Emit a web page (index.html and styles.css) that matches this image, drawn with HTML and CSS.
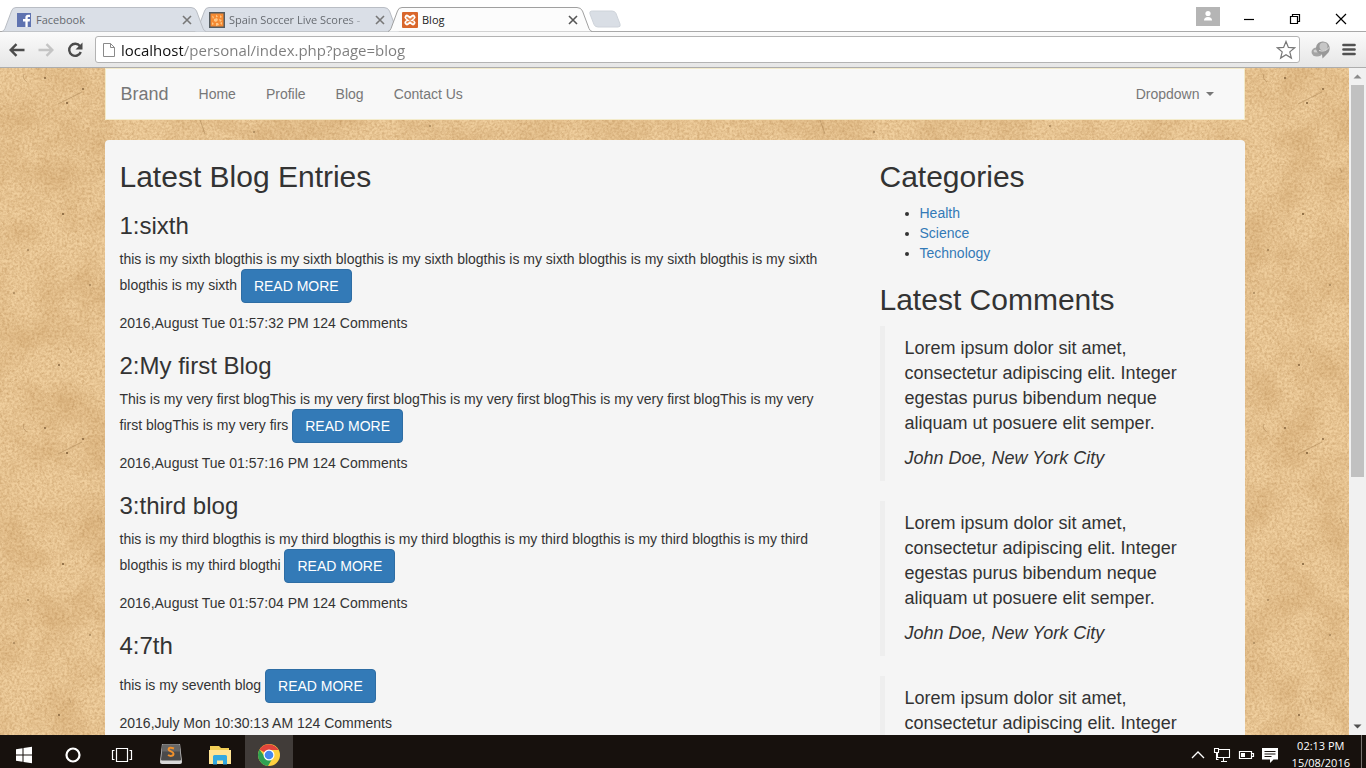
FILE: index.html
```html
<!DOCTYPE html>
<html lang="en">
<head>
<meta charset="utf-8">
<title>Blog</title>
<link rel="stylesheet" href="styles.css">
</head>
<body>
<svg class="defs" width="0" height="0" aria-hidden="true">
  <symbol id="tab-shape" viewBox="0 0 204 25" preserveAspectRatio="none">
    <path d="M0 24.500Q2 24 3 21.500L9.500 4Q10.500.500 14 .500H189Q193 .500 194.500 4L201 21.500Q202 24 204 24.500"/>
  </symbol>
  <symbol id="close" viewBox="0 0 10 10"><path d="M1 1l8 8M9 1L1 9" fill="none" stroke="currentColor" stroke-width="1.600"/></symbol>
</svg>
<div class="browser">
  <header class="tabstrip">
    <div class="tabs">
      <div class="tab tab-front">
        <svg class="tab-bg"><use href="#tab-shape"/></svg>
        <svg class="favicon" viewBox="0 0 16 16"><rect x="1" y="1" width="14" height="14" fill="#5f73b0"/><path d="M9.400 15V9.400H7V7h2.400V5.500C9.400 3.600 10.400 2.700 12 2.700h2v2.200h-1.300c-.8 0-1 .3-1 1V7H14l-.3 2.400h-2V15z" fill="#fff"/></svg>
        <span class="tab-title">Facebook</span>
        <button class="tab-close" aria-label="Close Facebook"><svg><use href="#close"/></svg></button>
      </div>
      <div class="tab">
        <svg class="tab-bg"><use href="#tab-shape"/></svg>
        <svg class="favicon" viewBox="0 0 16 16"><rect x=".75" y=".75" width="14.500" height="14.500" fill="#f58a32" stroke="#555b5e" stroke-width="1.500"/><path d="M3 3.500l2 1.500-1 2zM7 2.500l2 2-2 1zM11 3l2 2-2 1zM5 7l3-1 1 2-2 2-2-1zM10 7l3 1-2 2zM3 10l2 2-2 1zM7 11l2 0 1 2-3 1zM11 11l2-1v3z" fill="#ffc684"/></svg>
        <span class="tab-title tab-title-fade">Spain Soccer Live Scores -</span>
        <button class="tab-close" aria-label="Close Spain Soccer"><svg><use href="#close"/></svg></button>
      </div>
      <div class="tab tab-active">
        <svg class="tab-bg"><use href="#tab-shape"/></svg>
        <svg class="favicon" viewBox="0 0 16 16"><rect width="16" height="16" rx="1" fill="#d9662b"/><path d="M5 5.200L8 7.500l3-2.300M5 10.800L8 8.500l3 2.300" fill="none" stroke="#fff" stroke-width="5" stroke-linecap="round" stroke-linejoin="round"/><path d="M5 5.500L11 10.500M11 5.500L5 10.500" fill="none" stroke="#e58a52" stroke-width="1.800" stroke-linecap="round"/></svg>
        <span class="tab-title">Blog</span>
        <button class="tab-close" aria-label="Close Blog"><svg><use href="#close"/></svg></button>
      </div>
      <button class="new-tab" aria-label="New tab"><svg viewBox="0 0 34 18"><path d="M4.500 1H24q3 0 4 2.500l4 10.500q1 3-2 3H10q-3 0-4-2.500L2 4Q1 1 4.500 1z" fill="#d9dee5" stroke="#ced3da"/></svg></button>
    </div>
    <div class="window-controls">
      <button class="profile" aria-label="Profile"><svg viewBox="0 0 24 19"><circle cx="12" cy="6.500" r="2.600" fill="#fff"/><path d="M8 13.500q0-3.500 4-3.500t4 3.500z" fill="#fff"/></svg></button>
      <button aria-label="Minimize"><svg viewBox="0 0 12 12"><path d="M1 6.500h10" stroke="#000" stroke-width="1.200"/></svg></button>
      <button aria-label="Restore"><svg viewBox="0 0 12 12" fill="none" stroke="#000" stroke-width="1.200"><path d="M1.500 3.500h7v7h-7zM3.500 3V1.500h7v7H9"/></svg></button>
      <button aria-label="Close window"><svg viewBox="0 0 12 12"><path d="M1 1l10 10M11 1L1 11" stroke="#000" stroke-width="1.200"/></svg></button>
    </div>
  </header>
  <div class="toolbar">
    <button class="tool" aria-label="Back"><svg viewBox="0 0 18 18" fill="none" stroke="#4b4b4b" stroke-width="2.400"><path d="M16.500 9H3M8.500 3.200L2.700 9l5.800 5.800"/></svg></button>
    <button class="tool" aria-label="Forward"><svg viewBox="0 0 18 18" fill="none" stroke="#c4c4c4" stroke-width="2.400"><path d="M1.500 9H15M9.500 3.200L15.300 9l-5.800 5.800"/></svg></button>
    <button class="tool" aria-label="Reload"><svg viewBox="0 0 18 18"><path d="M14 5.200A6 6 0 1 0 14.800 11" fill="none" stroke="#4b4b4b" stroke-width="2.400"/><path d="M16.500 1.500v7h-7z" fill="#4b4b4b"/></svg></button>
    <div class="omnibox">
      <svg class="page-icon" viewBox="0 0 12 16" fill="#fff" stroke="#8a8a8a"><path d="M.500 1.500h7l4 4v9H.500zM7.500 1.500v4h4"/></svg>
      <input class="url" type="text" aria-label="Address" value="localhost/personal/index.php?page=blog">
      <button class="star" aria-label="Bookmark"><svg viewBox="0 0 20 20"><path d="M10 1.500l2.400 5.900 6.300.4-4.900 4.100 1.600 6.200L10 14.700l-5.400 3.400 1.600-6.200L1.300 7.800l6.300-.4z" fill="#fff" stroke="#777" stroke-width="1.200"/></svg></button>
    </div>
    <button class="ext" aria-label="Extension"><svg viewBox="0 0 20 18"><ellipse cx="6" cy="11" rx="5.500" ry="4.500" fill="#a5a5a5"/><ellipse cx="5" cy="10" rx="2.500" ry="1.500" fill="#d0d0d0"/><path d="M12 .500a7 7 0 0 1 4 12.500L11.500 17.500l-.5-4A6.500 6.500 0 0 1 12 .500z" fill="#999"/><circle cx="12.500" cy="5.500" r="4" fill="#c6c6c6"/><path d="M8 9.500q6 2 10-3" fill="none" stroke="#e0e0e0"/></svg></button>
    <button class="menu" aria-label="Menu"><svg viewBox="0 0 14 13"><path d="M1.500 2h11M1.500 6.500h11M1.500 11h11" stroke="#515151" stroke-width="2.700" stroke-linecap="round"/></svg></button>
  </div>
  <div class="viewport">
    <div class="page">
      <svg class="paper" aria-hidden="true">
        <defs>
          <filter id="grain" x="0" y="0" width="100%" height="100%" color-interpolation-filters="sRGB">
            <feTurbulence type="fractalNoise" baseFrequency=".4" numOctaves="3" seed="4"/>
            <feColorMatrix values="0 0 0 0 .66  0 0 0 0 .47  0 0 0 0 .25  .6 .4 0 0 -.37"/>
          </filter>
          <filter id="stain" x="0" y="0" width="100%" height="100%" color-interpolation-filters="sRGB">
            <feTurbulence type="fractalNoise" baseFrequency=".025" numOctaves="3" seed="9"/>
            <feColorMatrix values="0 0 0 0 .72  0 0 0 0 .52  0 0 0 0 .28  .55 0 0 0 -.2"/>
          </filter>
          <pattern id="specks" width="620" height="350" patternUnits="userSpaceOnUse">
            <g fill="#7b5a33"><circle cx="45" cy="10" r=".9"/><circle cx="67" cy="35" r="1"/><circle cx="83" cy="21" r=".9"/><circle cx="63" cy="146" r="1"/><circle cx="28" cy="182" r=".8"/><circle cx="14" cy="225" r=".8"/><circle cx="59" cy="297" r=".9"/><circle cx="90" cy="217" r=".8"/><circle cx="254" cy="64" r=".8"/><circle cx="430" cy="58" r=".8"/></g>
            <path d="M27 14q-5-3-3-8M58 36l24-12M200 52l5 14M100 100l2 5M69 280l2 5" fill="none" stroke="#a57f4e" stroke-width=".5"/>
          </pattern>
        </defs>
        <rect class="paper-base" width="100%" height="100%"/>
        <rect width="100%" height="100%" filter="url(#stain)"/>
        <rect width="100%" height="100%" filter="url(#grain)"/>
        <rect width="100%" height="100%" fill="url(#specks)"/>
      </svg>
      <div class="container">
        <nav class="navbar">
          <a class="brand" href="#">Brand</a>
          <a href="#">Home</a>
          <a href="#">Profile</a>
          <a href="#">Blog</a>
          <a href="#">Contact Us</a>
          <button class="dropdown">Dropdown <span class="caret"></span></button>
        </nav>
        <div class="well">
          <main class="entries">
            <h2>Latest Blog Entries</h2>
            <article>
              <h3>1:sixth</h3>
              <p>this is my sixth blogthis is my sixth blogthis is my sixth blogthis is my sixth blogthis is my sixth blogthis is my sixth blogthis is my sixth <button class="btn">READ MORE</button></p>
              <p>2016,August Tue 01:57:32 PM 124 Comments</p>
            </article>
            <article>
              <h3>2:My first Blog</h3>
              <p>This is my very first blogThis is my very first blogThis is my very first blogThis is my very first blogThis is my very first blogThis is my very firs <button class="btn">READ MORE</button></p>
              <p>2016,August Tue 01:57:16 PM 124 Comments</p>
            </article>
            <article>
              <h3>3:third blog</h3>
              <p>this is my third blogthis is my third blogthis is my third blogthis is my third blogthis is my third blogthis is my third blogthis is my third blogthi <button class="btn">READ MORE</button></p>
              <p>2016,August Tue 01:57:04 PM 124 Comments</p>
            </article>
            <article>
              <h3>4:7th</h3>
              <p>this is my seventh blog <button class="btn">READ MORE</button></p>
              <p>2016,July Mon 10:30:13 AM 124 Comments</p>
            </article>
          </main>
          <aside class="sidebar">
            <h2>Categories</h2>
            <ul>
              <li><a href="#">Health</a></li>
              <li><a href="#">Science</a></li>
              <li><a href="#">Technology</a></li>
            </ul>
            <h2>Latest Comments</h2>
            <blockquote>
              <p>Lorem ipsum dolor sit amet, consectetur adipiscing elit. Integer egestas purus bibendum neque aliquam ut posuere elit semper.</p>
              <em>John Doe, New York City</em>
            </blockquote>
            <blockquote>
              <p>Lorem ipsum dolor sit amet, consectetur adipiscing elit. Integer egestas purus bibendum neque aliquam ut posuere elit semper.</p>
              <em>John Doe, New York City</em>
            </blockquote>
            <blockquote>
              <p>Lorem ipsum dolor sit amet, consectetur adipiscing elit. Integer egestas purus bibendum neque aliquam ut posuere elit semper.</p>
              <em>John Doe, New York City</em>
            </blockquote>
          </aside>
        </div>
      </div>
    </div>
    <div class="scrollbar" aria-hidden="true">
      <svg viewBox="0 0 17 17"><path d="M4.500 10.500h8l-4-4z" fill="#8b8b8b"/></svg>
      <div class="track"><div class="thumb"></div></div>
      <svg viewBox="0 0 17 17"><path d="M4.500 6.500h8l-4 4z" fill="#505050"/></svg>
    </div>
  </div>
</div>
<footer class="taskbar">
  <div class="apps">
    <button aria-label="Start"><svg viewBox="0 0 24 24" fill="#fff"><path d="M4 6.200l6.500-1v6.300H4zM11.500 5l8.500-1.200v7.700h-8.500zM4 12.500h6.500v6.300l-6.500-1zM11.500 12.500H20v7.700L11.500 19z"/></svg></button>
    <button aria-label="Search"><svg viewBox="0 0 24 24"><circle cx="12" cy="12" r="6.500" fill="none" stroke="#fff" stroke-width="2.200"/></svg></button>
    <button aria-label="Task view"><svg viewBox="0 0 24 24" fill="none" stroke="#fff" stroke-width="1.200"><path d="M6.500 5.500h11v13h-11zM4.500 7.500h-2v9h2M19.500 7.500h2v9h-2"/></svg></button>
    <button aria-label="Sublime Text"><svg viewBox="0 0 24 24"><path d="M3 1h18l2 18q0 2-2 2H3q-2 0-2-2z" fill="#d9d9d9"/><path d="M3.500 1.500h17L22 16.500q0 1-1 1H3q-1 0-1-1z" fill="#4a4a4a"/><path d="M3.500 1.500h17l.7 7H2.800z" fill="#666"/><path d="M15 5.500Q9.800 3.700 9.500 6.300C9.500 8.700 14.500 8 14.500 10.700s-3.500 2.600-5.500 1.300" fill="none" stroke="#f0912c" stroke-width="2"/></svg></button>
    <button aria-label="File Explorer"><svg viewBox="0 0 24 24"><path d="M2 3h9l2 2h8v16H2z" fill="#f3cf57"/><path d="M1 7h22v14H1z" fill="#ffe494"/><path d="M5 21.500v-8q0-1.500 1.500-1.500h11q1.500 0 1.500 1.500v8h-4v-4H9v4z" fill="#32a9e1"/></svg></button>
    <button class="running" aria-label="Chrome"><svg viewBox="0 0 24 24"><circle cx="12" cy="12" r="11" fill="#ffd03e"/><path d="M12 12L2.500 6.500A11 11 0 0 1 21.500 7H12z" fill="#e2453b"/><path d="M2.500 6.500A11 11 0 0 0 11 23l5.300-9L12 12 8 14z" fill="#2ea152"/><circle cx="12" cy="12" r="5.500" fill="#fff"/><circle cx="12" cy="12" r="4.300" fill="#4587ee"/></svg></button>
  </div>
  <div class="tray">
    <svg viewBox="0 0 18 18" fill="none" stroke="#fff" stroke-width="1.300"><path d="M3 12l6-6 6 6"/></svg>
    <svg viewBox="0 0 18 18" fill="none" stroke="#fff" stroke-width="1.100"><path d="M6 3.500h10.500v8H4.500V7M8 15.500h6M10.500 11.500v4M1.500 2.500h4v4h-4zM3.500 6.500v7h2"/></svg>
    <svg viewBox="0 0 18 18"><path d="M2.500 5.500h12v7h-12zM15 7.500h1.500v3H15" fill="none" stroke="#fff" stroke-width="1.200"/><path d="M4 7h4v4H4z" fill="#fff"/></svg>
    <svg viewBox="0 0 18 18"><path d="M1 2h16v11.500h-4.500L9 17v-3.500H1z" fill="#fff"/><path d="M3.500 5.500h11M3.500 8h11M3.500 10.500h7" stroke="#17110d" stroke-width="1.100"/></svg>
    <div class="clock"><span>02:13 PM</span><span>15/08/2016</span></div>
    <div class="show-desktop"></div>
  </div>
</footer>
</body>
</html>
```
FILE: styles.css
```css
* { box-sizing: border-box; }

body {
  margin: 0;
  height: 100vh;
  display: flex;
  flex-direction: column;
  overflow: hidden;
  font: 14px/20px "Liberation Sans", Arial, sans-serif;
  color: #333;
  background: #fff;
}

button {
  border: 0;
  padding: 0;
  background: none;
  font: inherit;
  color: inherit;
}

svg { display: block; }
.defs { position: absolute; }

.browser {
  flex: 1;
  min-height: 0;
  display: flex;
  flex-direction: column;
}

/* Tab strip */
.tabstrip {
  display: flex;
  justify-content: space-between;
  height: 32px;
  padding-top: 7px;
  border-bottom: 1px solid #a9a9a9;
  font: 11px/16px "Open Sans", sans-serif;
  color: #666a70;
}

.tabs { display: flex; padding-left: 2px; }

.tab {
  position: relative;
  isolation: isolate;
  display: flex;
  align-items: center;
  width: 204px;
  height: 25px;
  margin-right: -11px;
  padding: 0 14px;
}
.tab-front { z-index: 1; }
.tab-active { z-index: 2; color: #222; }

.tab-bg {
  position: absolute;
  z-index: -1;
  inset: 0;
  width: 100%;
  height: 100%;
  fill: #dadfe7;
  stroke: #b9bdc4;
}
.tab-active .tab-bg { fill: #fcfcfc; stroke: #a0a0a0; }

.favicon { width: 16px; height: 16px; margin-right: 4px; }
.tab-title { flex: 1; white-space: nowrap; overflow: hidden; }
.tab-title-fade { mask-image: linear-gradient(90deg, #000 85%, transparent); }
.tab-close { padding: 0 0 0 6px; color: #777; }
.tab-active .tab-close { color: #555; }
.tab-close svg { width: 10px; height: 10px; }

.new-tab { margin-left: 7px; }
.new-tab svg { width: 34px; height: 18px; }

.window-controls { display: flex; align-items: flex-start; padding-right: 2px; }
.window-controls button {
  display: flex;
  justify-content: center;
  width: 46px;
  padding-top: 6px;
}
.window-controls svg { width: 12px; height: 12px; }
.window-controls .profile {
  width: 24px;
  height: 19px;
  margin-right: 6px;
  padding: 0;
  background: #b5b5b5;
}
.window-controls .profile svg { width: 24px; height: 19px; }

/* Toolbar */
.toolbar {
  display: flex;
  align-items: center;
  gap: 11px;
  height: 36px;
  padding: 0 10px 0 8px;
  border-bottom: 1px solid #adadad;
  background: linear-gradient(#fbfbfb, #e6e6e6);
}
.tool svg { width: 18px; height: 18px; }

.omnibox {
  flex: 1;
  display: flex;
  align-items: center;
  height: 27px;
  padding: 0 3px 0 7px;
  border: 1px solid #b3b3b3;
  border-radius: 3px;
  background: #fff;
}
.page-icon { width: 12px; height: 16px; }
.url {
  flex: 1;
  min-width: 0;
  margin-left: 6px;
  padding: 0;
  border: 0;
  outline: 0;
  font: 15px/22px "Open Sans", sans-serif;
  color: transparent;
  background: linear-gradient(90deg, #111 62px, #7c7c7c 62px);
  -webkit-background-clip: text;
  background-clip: text;
}
.star svg { width: 20px; height: 20px; }
.ext svg { width: 20px; height: 18px; }
.menu svg { width: 14px; height: 13px; }

/* Page area */
.viewport { flex: 1; min-height: 0; display: flex; }
.page { position: relative; flex: 1; min-width: 0; overflow: hidden; }
.paper { position: absolute; inset: 0; width: 100%; height: 100%; }
.paper-base { fill: #f0cf9e; }
.container { position: relative; max-width: 1140px; margin: 0 auto; }

.navbar {
  display: flex;
  align-items: center;
  gap: 30px;
  height: 52px;
  margin-bottom: 20px;
  padding: 0 15px;
  border: 1px solid #f3ebcb;
  background: #f8f8f8;
  color: #777;
}
.navbar a { color: inherit; text-decoration: none; }
.navbar .brand { font-size: 18px; }
.dropdown {
  display: flex;
  align-items: center;
  gap: 6px;
  margin-left: auto;
  padding-right: 15px;
}
.caret { border: 4px solid transparent; border-top-color: #777; border-bottom: 0; }

.well {
  display: grid;
  grid-template-columns: 2fr 1fr;
  border-radius: 4px;
  background: #f5f5f5;
}
.entries, .sidebar { min-width: 0; padding: 0 15px 20px; }
.entries { padding-right: 30px; }

h2, h3 { margin: 20px 0 10px; font-weight: 400; color: #333; }
h2 { font-size: 30px; line-height: 33px; }
h3 { font-size: 24px; line-height: 26px; }
p { margin: 0 0 10px; }

.btn {
  height: 34px;
  padding: 0 12px;
  border: 1px solid #2e6da4;
  border-radius: 4px;
  background: #337ab7;
  color: #fff;
  vertical-align: middle;
}

ul { margin: 0 0 10px; padding-left: 40px; }
.sidebar a { color: #337ab7; text-decoration: none; }

blockquote {
  margin: 0 0 20px;
  padding: 10px 20px;
  border-left: 5px solid #eee;
  font-size: 18px;
  line-height: 25px;
}
blockquote em { display: block; }

.scrollbar {
  display: flex;
  flex-direction: column;
  width: 17px;
  background: #f1f1f1;
}
.scrollbar svg { width: 17px; height: 17px; }
.track { flex: 1; padding: 0 2px; }
.thumb { height: 62%; background: #c1c1c1; }

/* Taskbar */
.taskbar {
  display: flex;
  justify-content: space-between;
  height: 33px;
  overflow: hidden;
  background: #17110d;
  color: #fff;
}
.apps { display: flex; gap: 1px; }
.apps button {
  display: flex;
  justify-content: center;
  width: 48px;
  padding-top: 8px;
}
.apps svg { width: 24px; height: 24px; }
.apps .running { background: #413c39; }

.tray { display: flex; gap: 6px; }
.tray svg { width: 18px; height: 18px; margin-top: 11px; }
.clock {
  display: flex;
  flex-direction: column;
  align-items: center;
  padding: 2px 5px 0 7px;
  font: 11px/17px "Open Sans", sans-serif;
}
.show-desktop { width: 5px; border-left: 1px solid #77726f; }
```
